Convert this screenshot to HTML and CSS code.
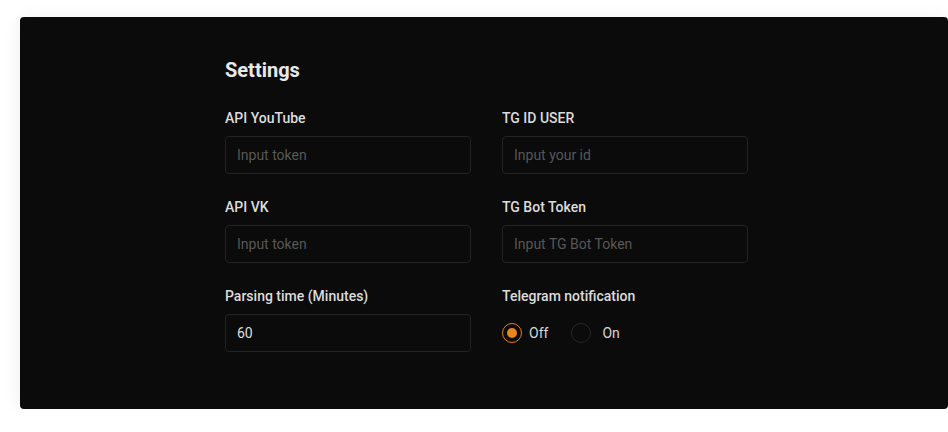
FILE: index.html
```html
<!DOCTYPE html>
<html lang="en">
<head>
<meta charset="utf-8">
<title>Settings</title>
<link rel="stylesheet" href="styles.css">
</head>
<body>
<main class="card">
  <h1 class="title">Settings</h1>
  <form class="grid">
    <div class="field">
      <label class="label" for="yt">API YouTube</label>
      <input class="input" id="yt" type="text" placeholder="Input token">
    </div>
    <div class="field">
      <label class="label" for="tgid">TG ID USER</label>
      <input class="input" id="tgid" type="text" placeholder="Input your id">
    </div>
    <div class="field">
      <label class="label" for="vk">API VK</label>
      <input class="input" id="vk" type="text" placeholder="Input token">
    </div>
    <div class="field">
      <label class="label" for="bot">TG Bot Token</label>
      <input class="input" id="bot" type="text" placeholder="Input TG Bot Token">
    </div>
    <div class="field">
      <label class="label" for="time">Parsing time (Minutes)</label>
      <input class="input" id="time" type="text" value="60">
    </div>
    <div class="field">
      <span class="label">Telegram notification</span>
      <div class="radios">
        <label class="radio">
          <span class="dot dot-on"></span>
          <span class="radio-text">Off</span>
        </label>
        <label class="radio radio-wide">
          <span class="dot"></span>
          <span class="radio-text">On</span>
        </label>
      </div>
    </div>
  </form>
</main>
</body>
</html>
```

FILE: styles.css
```css
html, body {
  margin: 0;
  padding: 0;
  background: #ffffff;
}

body {
  padding: 17px 0 0 20px;
  font-family: Roboto, "Liberation Sans", Arial, sans-serif;
  overflow: hidden;
}

.card {
  width: 928px;
  height: 392px;
  box-sizing: border-box;
  background: #0b0b0b;
  border-radius: 4px;
  box-shadow: 0 2px 18px rgba(0, 0, 0, 0.07);
  padding: 39px 0 0 205px;
}

.title {
  margin: 0 0 23px 0;
  font-size: 20px;
  line-height: 28px;
  font-weight: 700;
  color: #e9e9e9;
}

.grid {
  display: grid;
  grid-template-columns: 246px 246px;
  column-gap: 31px;
  row-gap: 22px;
  margin: 0;
}

.field {
  display: flex;
  flex-direction: column;
}

.label {
  font-size: 14px;
  line-height: 20px;
  font-weight: 500;
  color: #dcdcdc;
  padding-top: 1px;
  margin-bottom: 8px;
}

.input {
  height: 38px;
  box-sizing: border-box;
  background: #0b0b0b;
  border: 1px solid #232323;
  border-radius: 4px;
  padding: 0 11px;
  font-family: inherit;
  font-size: 14px;
  color: #dedede;
  outline: none;
}

.input::placeholder {
  color: #575757;
}

.radios {
  display: flex;
  align-items: center;
  height: 38px;
  gap: 23px;
}

.radio {
  display: flex;
  align-items: center;
  gap: 7px;
}

.radio-wide {
  gap: 11px;
}

.dot {
  width: 20px;
  height: 20px;
  box-sizing: border-box;
  border-radius: 50%;
  border: 1px solid #262626;
  display: flex;
  align-items: center;
  justify-content: center;
}

.dot-on {
  border: 1.5px solid #e3801a;
}

.dot-on::after {
  content: "";
  width: 10px;
  height: 10px;
  border-radius: 50%;
  background: #e8861c;
}

.radio-text {
  font-size: 14px;
  line-height: 20px;
  color: #d6d6d6;
}
```
